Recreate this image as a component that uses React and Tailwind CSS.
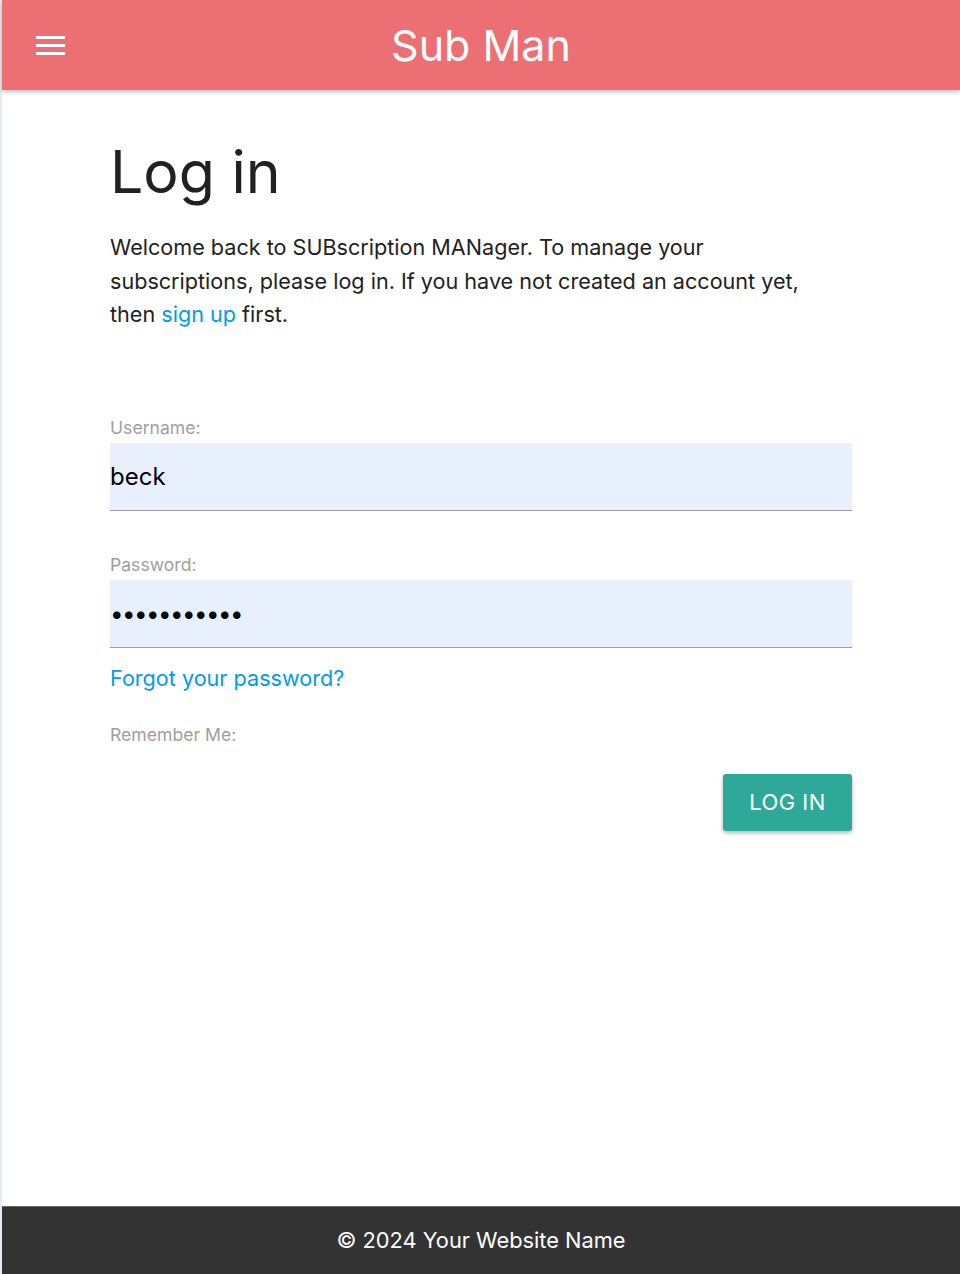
import { useState } from 'react';

const font = { fontFamily: 'Inter, "Noto Sans", sans-serif' };

const Field = ({ label, type, value, onChange, className = '' }) => (
  <div className="flex flex-col">
    <label className="text-[17.6px] leading-[22px] text-[#9e9e9e]">{label}</label>
    <input
      type={type}
      value={value}
      onChange={onChange}
      className={`mt-[4px] h-[68px] w-full border-b border-[#9e9e9e] bg-[#e8f0fe] text-[24px] text-black outline-none ${className}`}
    />
  </div>
);

export default function App() {
  const [username, setUsername] = useState('beck');
  const [password, setPassword] = useState('secretpass1');

  return (
    <div className="flex min-h-[1274px] flex-col border-l-2 border-[#e6eaf1] bg-white" style={font}>
      <header className="relative z-10 flex h-[90px] items-center bg-[#ec6f73] px-[34px] shadow-[0_2px_4px_rgba(0,0,0,0.25)]">
        <button className="flex h-[30px] w-[30px] flex-col justify-center gap-[5px]">
          <span className="block h-[3px] w-[29px] bg-white" />
          <span className="block h-[3px] w-[29px] bg-white" />
          <span className="block h-[3px] w-[29px] bg-white" />
        </button>
        <h1 className="absolute left-1/2 top-[19px] -translate-x-1/2 text-[43px] leading-[52px] text-white">Sub Man</h1>
      </header>

      <main className="mx-auto w-[742px] flex-1 pt-[47px]">
        <h2 className="text-[59px] font-normal leading-[70px] text-[#212121]">Log in</h2>
        <p className="mt-[24px] w-[706px] text-[21.6px] leading-[33.5px] text-[#212121]">
          Welcome back to SUBscription MANager. To manage your subscriptions, please log in. If you have not created an account yet, then{' '}
          <a href="#" className="text-[#039be5]">sign up</a> first.
        </p>

        <form className="mt-[85px] flex flex-col" onSubmit={(e) => e.preventDefault()}>
          <Field label="Username:" type="text" value={username} onChange={(e) => setUsername(e.target.value)} />
          <div className="mt-[43px]">
            <Field
              label="Password:"
              type="password"
              value={password}
              onChange={(e) => setPassword(e.target.value)}
              className="tracking-[-1.5px]"
            />
          </div>
          <a href="#" className="mt-[16px] self-start text-[21.6px] leading-[28px] text-[#039be5]">Forgot your password?</a>
          <label className="mt-[32px] text-[17.6px] leading-[22px] text-[#9e9e9e]">Remember Me:</label>
          <div className="mt-[28px] flex justify-end">
            <button
              type="submit"
              className="h-[57px] w-[129px] rounded-[3px] bg-[#2ea899] text-[22px] tracking-[0.5px] text-white shadow-[0_2px_4px_rgba(0,0,0,0.3)]"
            >
              LOG IN
            </button>
          </div>
        </form>
      </main>

      <footer className="flex h-[68px] items-center justify-center border-t border-[#666] bg-[#333] text-[21.8px] text-white">
        © 2024 Your Website Name
      </footer>
    </div>
  );
}
